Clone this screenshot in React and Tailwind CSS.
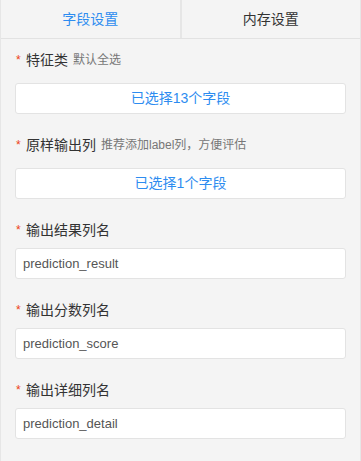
import React, { useState } from 'react';

const fields = [
  { label: '特征类', hint: '默认全选', type: 'button', value: '已选择13个字段' },
  { label: '原样输出列', hint: '推荐添加label列，方便评估', type: 'button', value: '已选择1个字段' },
  { label: '输出结果列名', type: 'input', value: 'prediction_result' },
  { label: '输出分数列名', type: 'input', value: 'prediction_score' },
  { label: '输出详细列名', type: 'input', value: 'prediction_detail' },
];

const App = () => {
  const [tab, setTab] = useState(0);

  return (
    <div
      className="w-[361px] h-[461px] bg-[#f4f4f4] border-x border-[#e6e6e6] text-[#333]"
      style={{ fontFamily: '"Liberation Sans", "Noto Sans CJK SC", sans-serif' }}
    >
      {/* Tabs */}
      <div className="flex h-[39px] border-b border-[#e2e2e2]">
        {['字段设置', '内存设置'].map((t, i) => (
          <button
            key={t}
            onClick={() => setTab(i)}
            className={`flex-1 flex items-center justify-center text-[14px] ${
              i === 0 ? 'border-r-2 border-[#e6e6e6]' : ''
            } ${tab === i ? 'text-[#2d8cf0]' : 'text-[#333]'}`}
          >
            {t}
          </button>
        ))}
      </div>

      {/* Form */}
      <div className="px-[14px] pt-[9px]">
        {fields.map((f) => (
          <div key={f.label} className="mb-[19px]">
            <div className={`flex items-center h-[24px] ${f.type === 'button' ? 'mb-[11px]' : 'mb-[6px]'}`}>
              <span className="text-[#ed3f14] text-[12px] w-[11px] pl-[1px] leading-none">*</span>
              <span className="text-[14px] text-[#333]">{f.label}</span>
              {f.hint && <span className="ml-[5px] text-[12px] text-[#777]">{f.hint}</span>}
            </div>
            {f.type === 'button' ? (
              <div className="h-[31px] bg-white border border-[#e3e3e3] rounded-[3px] flex items-center justify-center text-[14px] text-[#2d8cf0]">
                {f.value}
              </div>
            ) : (
              <input
                defaultValue={f.value}
                className="w-full h-[31px] bg-white border border-[#e3e3e3] rounded-[3px] px-[7px] text-[13px] text-[#555] outline-none"
              />
            )}
          </div>
        ))}
      </div>
    </div>
  );
};

export default App;
